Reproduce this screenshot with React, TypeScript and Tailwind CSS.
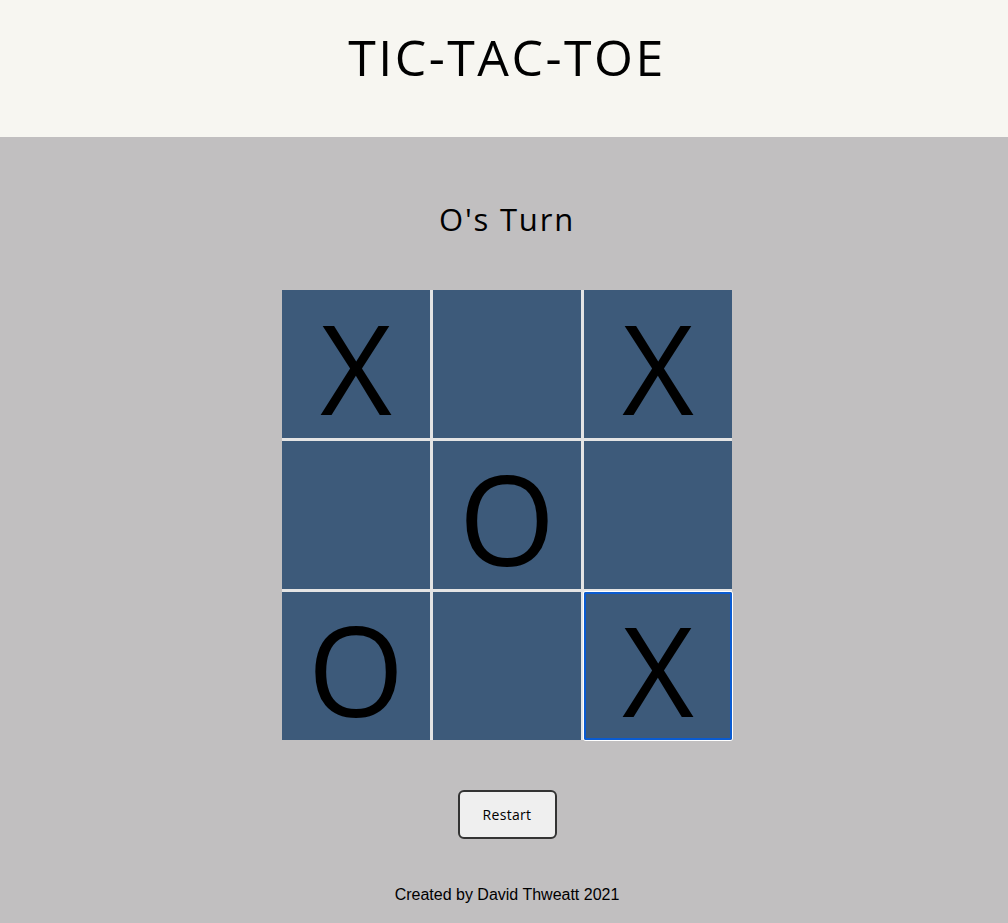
import { useState } from "react";

type Cell = "X" | "O" | null;

const START: Cell[] = ["X", null, "X", null, "O", null, "O", null, "X"];

export default function App() {
  const [board, setBoard] = useState<Cell[]>(START);
  const [turn, setTurn] = useState<"X" | "O">("O");

  function play(i: number) {
    if (board[i]) return;
    const next = board.slice();
    next[i] = turn;
    setBoard(next);
    setTurn(turn === "X" ? "O" : "X");
  }

  function restart() {
    setBoard(Array(9).fill(null));
    setTurn("X");
  }

  return (
    <div className="min-h-screen bg-[#c1bfc0] pl-[6px] font-['Open_Sans','Noto_Sans',sans-serif] text-black">
      <header className="-ml-[6px] flex h-[137px] justify-center bg-[#f7f6f1] pl-[6px] pt-[22px]">
        <h1 className="text-[50px] leading-[70px] font-normal tracking-[2.5px]">TIC-TAC-TOE</h1>
      </header>

      <main className="flex flex-col items-center">
        <h2 className="mt-[60px] text-[31px] leading-[44px] font-normal tracking-[1.8px]">
          {turn}'s Turn
        </h2>

        <div className="mt-[49px] grid grid-cols-[repeat(3,148px)] grid-rows-[repeat(3,148px)] gap-[3px] bg-[#e4e4e4]">
          {board.map((c, i) => (
            <button
              key={i}
              onClick={() => play(i)}
              className={`flex items-center justify-center bg-[#3d5a7a] pt-[6px] text-[124px] leading-none font-normal ${
                i === 8 ? "rounded-[2px] outline-2 -outline-offset-2 outline-[#0a5bd1] ring-1 ring-white" : ""
              }`}
            >
              {c}
            </button>
          ))}
        </div>

        <button
          onClick={restart}
          className="mt-[50px] h-[49px] w-[99px] rounded-[6px] border-2 border-[#333] bg-[#efefef] text-[14px] tracking-[0.3px]"
        >
          Restart
        </button>

        <footer className="mt-[44px] pb-[20px] font-['Liberation_Sans',Arial,sans-serif] text-[16px]">
          Created by David Thweatt 2021
        </footer>
      </main>
    </div>
  );
}
